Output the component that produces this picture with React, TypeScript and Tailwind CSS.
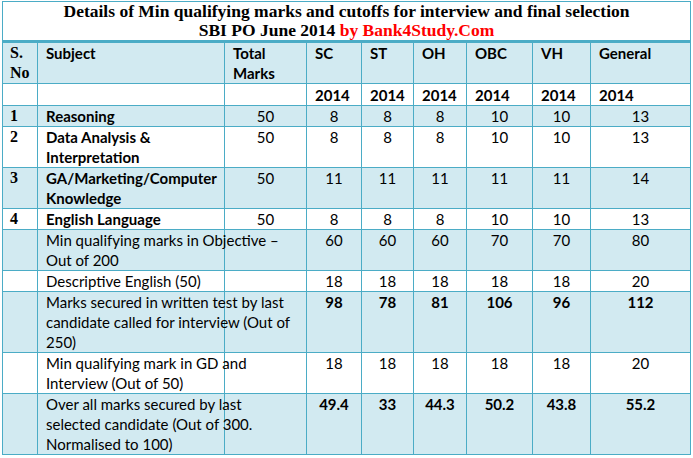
import React from "react"

type Row = {
  no?: string
  subject: string[]
  total?: string
  values: string[]
  bold?: boolean
  subjectBold?: boolean
  shaded: boolean
}

const rows: Row[] = [
  { no: "1", subject: ["Reasoning"], total: "50", values: ["8", "8", "8", "10", "10", "13"], subjectBold: true, shaded: true },
  { no: "2", subject: ["Data Analysis &", "Interpretation"], total: "50", values: ["8", "8", "8", "10", "10", "13"], subjectBold: true, shaded: false },
  { no: "3", subject: ["GA/Marketing/Computer", "Knowledge"], total: "50", values: ["11", "11", "11", "11", "11", "14"], subjectBold: true, shaded: true },
  { no: "4", subject: ["English Language"], total: "50", values: ["8", "8", "8", "10", "10", "13"], subjectBold: true, shaded: false },
  { subject: ["Min qualifying marks in Objective \u2013", "Out of 200"], values: ["60", "60", "60", "70", "70", "80"], shaded: true },
  { subject: ["Descriptive English (50)"], values: ["18", "18", "18", "18", "18", "20"], shaded: false },
  {
    subject: ["Marks secured in written test by last", "candidate called for interview (Out of", "250)"],
    values: ["98", "78", "81", "106", "96", "112"],
    bold: true,
    shaded: true,
  },
  { subject: ["Min qualifying mark in GD and", "Interview (Out of 50)"], values: ["18", "18", "18", "18", "18", "20"], shaded: false },
  {
    subject: ["Over all marks secured by last", "selected candidate (Out of 300.", "Normalised to 100)"],
    values: ["49.4", "33", "44.3", "50.2", "43.8", "55.2"],
    bold: true,
    shaded: true,
  },
]

const categories = ["SC", "ST", "OH", "OBC", "VH", "General"]

const cell = "border border-[#4bacc6] align-top leading-[20px] p-0"
const serif = "font-['Liberation_Serif',serif] font-bold text-[16px] pl-[7px]"

export default function App() {
  return (
    <div className="min-h-[458px] w-[693px] bg-white pl-[2px] pt-[1px] text-black font-['Lato','Open_Sans',sans-serif] text-[15px]">
      <table className="w-[688px] table-fixed border-collapse">
        <colgroup>
          <col className="w-[35px]" />
          <col className="w-[187px]" />
          <col className="w-[82px]" />
          <col className="w-[55px]" />
          <col className="w-[52px]" />
          <col className="w-[53px]" />
          <col className="w-[66px]" />
          <col className="w-[58px]" />
          <col className="w-[100px]" />
        </colgroup>
        <tbody>
          {/* Title */}
          <tr>
            <td
              colSpan={9}
              className="border border-[#4bacc6] border-b-[3px] bg-white p-0 text-center font-['Liberation_Serif',serif] font-bold text-[17.5px] leading-[19px]"
            >
              <div>Details of Min qualifying marks and cutoffs for interview and final selection</div>
              <div>
                SBI PO June 2014 <span className="text-[#ff0000]">by Bank4Study.Com</span>
              </div>
            </td>
          </tr>

          {/* Header */}
          <tr className="bg-[#d2eaf1] font-bold">
            <td className={`${cell} ${serif}`}>
              S.
              <br />
              No
            </td>
            <td className={`${cell} pl-2`}>Subject</td>
            <td className={`${cell} pl-2`}>
              Total
              <br />
              Marks
            </td>
            {categories.map((c) => (
              <td key={c} className={`${cell} pl-2`}>
                {c}
              </td>
            ))}
          </tr>

          {/* Year row */}
          <tr className="bg-white font-bold">
            <td className={cell} />
            <td className={cell} />
            <td className={cell} />
            {categories.map((c) => (
              <td key={c} className={`${cell} pl-2 pt-px`}>
                2014
              </td>
            ))}
          </tr>

          {rows.map((r, i) => (
            <tr key={i} className={r.shaded ? "bg-[#d2eaf1]" : "bg-white"}>
              <td className={`${cell} ${serif}`}>{r.no}</td>
              <td className={`${cell} pl-2 whitespace-nowrap ${r.subjectBold ? "font-bold" : ""}`}>
                {r.subject.map((line, j) => (
                  <div key={j}>{line}</div>
                ))}
              </td>
              <td className={`${cell} text-center`}>{r.total}</td>
              {r.values.map((v, j) => (
                <td key={j} className={`${cell} text-center ${r.bold ? "font-bold" : ""}`}>
                  {v}
                </td>
              ))}
            </tr>
          ))}
        </tbody>
      </table>
    </div>
  )
}
